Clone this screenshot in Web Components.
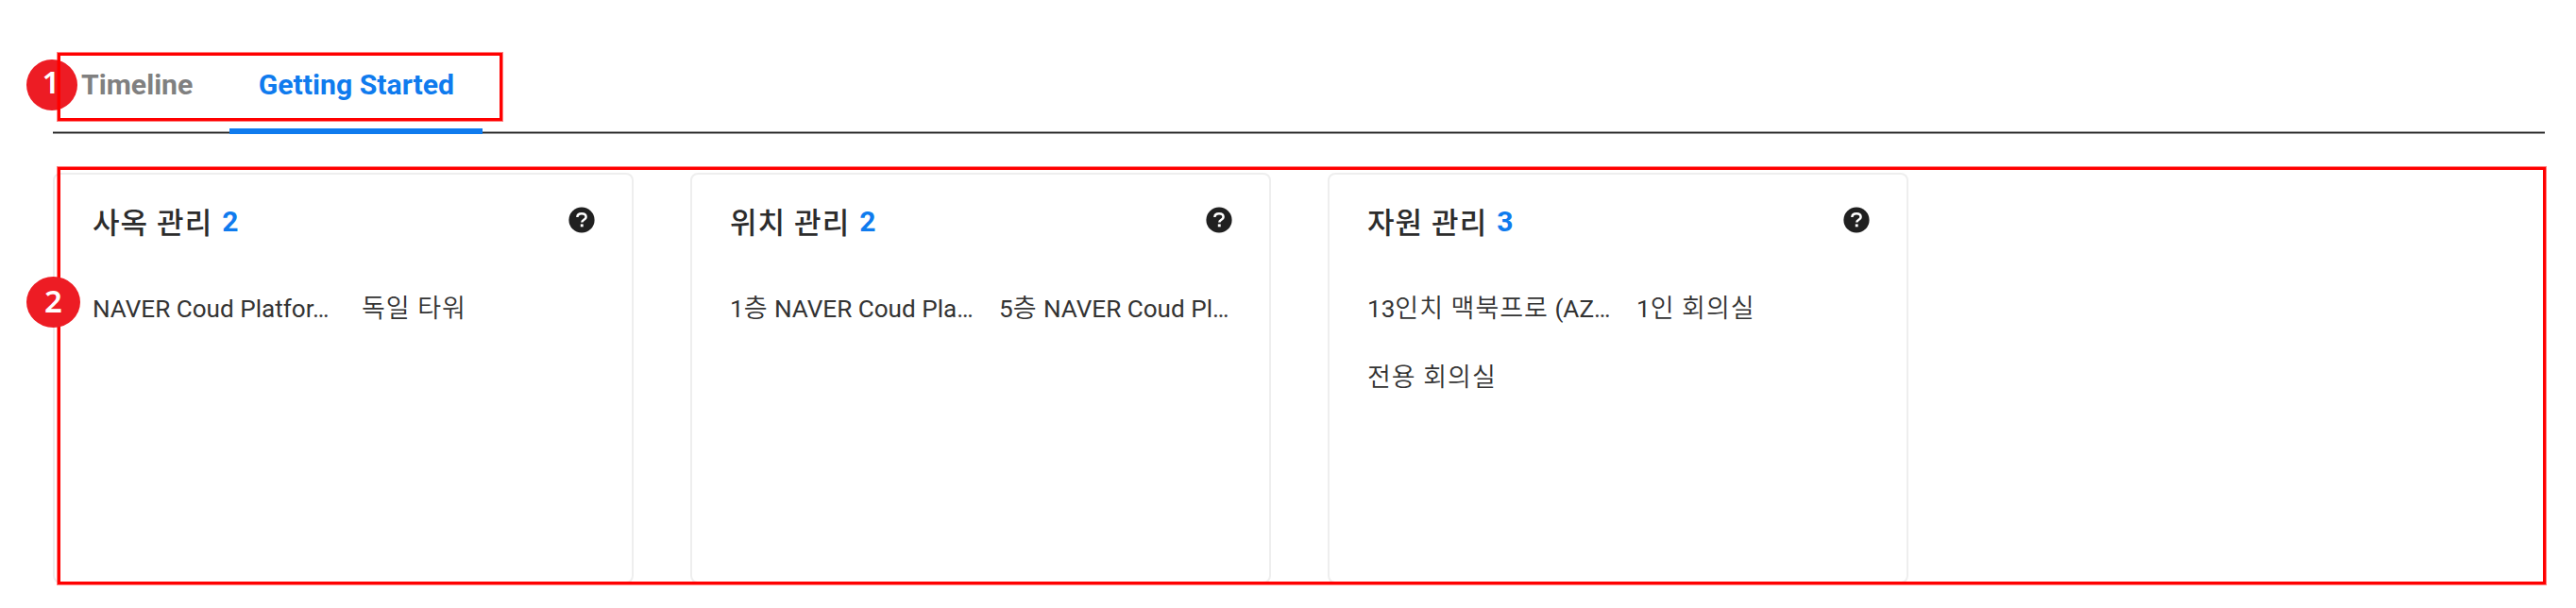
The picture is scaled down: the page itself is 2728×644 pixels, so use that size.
<!DOCTYPE html>
<html lang="ko">
<head>
<meta charset="utf-8">
<title>Getting Started</title>
<style>
  body {
    margin: 0;
    background: #fff;
    font-family: Roboto, "Noto Sans CJK KR", sans-serif;
    color: #222;
  }
</style>
</head>
<body>
<start-page></start-page>

<script>
class TabItem extends HTMLElement {
  constructor() {
    super();
    this.attachShadow({ mode: 'open' }).innerHTML = `
      <style>
        :host {
          box-sizing: border-box;
          display: flex;
          justify-content: center;
          height: 87px;
          padding-top: 14px;
          font-size: 30.2px;
          font-weight: 700;
          line-height: 42px;
          white-space: nowrap;
          color: #808080;
        }
        :host([active]) {
          width: 268px;
          color: #0f7bee;
          border-bottom: 6px solid #0f7bee;
        }
      </style>
      <slot></slot>
    `;
  }
}

class HelpIcon extends HTMLElement {
  constructor() {
    super();
    this.attachShadow({ mode: 'open' }).innerHTML = `
      <style>
        :host { display: block; width: 28px; height: 28px; }
        svg { display: block; }
      </style>
      <svg width="28" height="28" viewBox="0 0 28 28">
        <circle cx="14" cy="14" r="13.6" fill="#202020"/>
        <path d="M9.4 11c0-2.4 1.9-3.8 4.6-3.8s4.6 1.4 4.6 3.7c0 2.9-4.3 2.9-4.3 5.7" fill="none" stroke="#fff" stroke-width="2.5"/>
        <rect x="12.8" y="18.4" width="2.9" height="2.9" fill="#fff"/>
      </svg>
    `;
  }
}

class ManageCard extends HTMLElement {
  constructor() {
    super();
    this.attachShadow({ mode: 'open' }).innerHTML = `
      <style>
        :host {
          box-sizing: border-box;
          display: block;
          width: 615px;
          height: 435px;
          padding: 29px 39px 0 40px;
          border: 2px solid #eee;
          border-radius: 8px;
        }
        header {
          display: flex;
          align-items: center;
          height: 42px;
          line-height: 42px;
          white-space: nowrap;
        }
        h2 {
          margin: 4px 0 0;
          font-size: 31px;
          font-weight: 500;
          letter-spacing: 1.1px;
          color: #2c2c2c;
        }
        .count { margin-left: 10px; font-size: 30px; font-weight: 700; color: #0f7bee; }
        help-icon { margin: -5px 0 0 auto; }
        .items {
          display: grid;
          grid-template-columns: 256px 256px;
          column-gap: 29px;
          margin-top: 35px;
        }
      </style>
      <header><h2></h2><span class="count"></span><help-icon></help-icon></header>
      <div class="items"><slot></slot></div>
    `;
  }

  connectedCallback() {
    this.shadowRoot.querySelector('h2').textContent = this.getAttribute('heading');
    this.shadowRoot.querySelector('.count').textContent = this.getAttribute('count');
  }
}

class CardEntry extends HTMLElement {
  constructor() {
    super();
    this.attachShadow({ mode: 'open' }).innerHTML = `
      <style>
        :host {
          display: block;
          height: 72.5px;
          font-size: 26.1px;
          line-height: 72px;
          color: #333;
          white-space: nowrap;
        }
        /* Hangul runs sit a little larger than the Latin text */
        ::slotted(span) { font-size: 27px; font-weight: 350; letter-spacing: 1px; }
      </style>
      <slot></slot>
    `;
  }
}

class StepBadge extends HTMLElement {
  constructor() {
    super();
    this.attachShadow({ mode: 'open' }).innerHTML = `
      <style>
        :host {
          display: block;
          width: 57px;
          height: 54px;
          border-radius: 50%;
          background: #ed1c24;
          color: #fff;
          font: 600 33px/52px "Noto Sans", sans-serif;
          text-align: center;
        }
      </style>
      <slot></slot>
    `;
  }
}

class StartPage extends HTMLElement {
  constructor() {
    super();
    this.attachShadow({ mode: 'open' }).innerHTML = `
      <style>
        :host {
          box-sizing: border-box;
          display: block;
          position: relative;
          height: 644px;
          padding: 55px 33px 0 56px;
          overflow: hidden;
          z-index: 0;
        }
        nav {
          display: flex;
          position: relative;
          height: 87px;
          padding-left: 30px;
          gap: 39px;
        }
        nav::after {
          content: '';
          position: absolute;
          left: 0;
          right: 0;
          bottom: 0;
          height: 1px;
          background: #222;
          border: solid #999;
          border-width: 1px 0;
          z-index: -1;
        }
        .cards { display: flex; gap: 60px; margin-top: 41px; }

        /* numbered callouts laid over the page */
        .frame {
          position: absolute;
          box-sizing: border-box;
          border: 3px solid #f00;
          box-shadow: 0 0 0 1px rgba(255, 0, 0, .5);
        }
        .tabs { left: 61px; top: 56px; width: 471px; height: 72px; }
        .body { left: 61px; top: 177px; width: 2635px; height: 442px; }
        step-badge { position: absolute; left: 28px; }
        .one { top: 62.5px; width: 54px; line-height: 47px; text-indent: -2px; }
        .two { top: 293px; }
      </style>
      <nav>
        <tab-item>Timeline</tab-item>
        <tab-item active>Getting Started</tab-item>
      </nav>
      <section class="cards">
        <manage-card heading="사옥 관리" count="2">
          <card-entry>NAVER Coud Platfor…</card-entry>
          <card-entry><span>독일 타워</span></card-entry>
        </manage-card>
        <manage-card heading="위치 관리" count="2">
          <card-entry>1<span>층</span> NAVER Coud Pla…</card-entry>
          <card-entry>5<span>층</span> NAVER Coud Pl…</card-entry>
        </manage-card>
        <manage-card heading="자원 관리" count="3">
          <card-entry>13<span>인치 맥북프로</span> (AZ…</card-entry>
          <card-entry>1<span>인 회의실</span></card-entry>
          <card-entry><span>전용 회의실</span></card-entry>
        </manage-card>
      </section>
      <step-badge class="one">1</step-badge>
      <div class="frame tabs"></div>
      <div class="frame body"></div>
      <step-badge class="two">2</step-badge>
    `;
  }
}

customElements.define('tab-item', TabItem);
customElements.define('help-icon', HelpIcon);
customElements.define('card-entry', CardEntry);
customElements.define('manage-card', ManageCard);
customElements.define('step-badge', StepBadge);
customElements.define('start-page', StartPage);
</script>
</body>
</html>
